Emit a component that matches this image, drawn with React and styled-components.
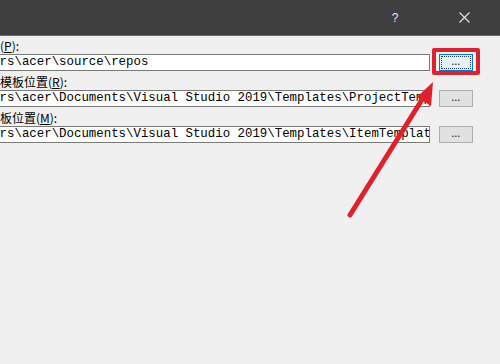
import React from "react";
import styled, { createGlobalStyle } from "styled-components";

const Global = createGlobalStyle`
  html, body { margin: 0; padding: 0; background: #f0f0f0; }
  body { width: 500px; height: 364px; overflow: hidden; font-family: "Noto Sans CJK SC", "Noto Sans", sans-serif; }
`;

const Page = styled.div`
  position: relative;
  width: 500px;
  height: 364px;
  background: #f0f0f0;
  overflow: hidden;
`;

const TitleBar = styled.div`
  height: 35px;
  background: #3f3f3f;
  border-bottom: 1px solid #6b6b6b;
  display: flex;
  align-items: center;
  justify-content: flex-end;
  color: #e6e6e6;
`;

const TitleButton = styled.div`
  width: ${(p) => p.$w}px;
  height: 35px;
  margin-right: ${(p) => p.$mr || 0}px;
  display: flex;
  align-items: center;
  justify-content: center;
  font-family: "Liberation Sans", Arial, sans-serif;
  font-size: 12px;
`;

const Form = styled.div`
  margin-left: -48px;
  padding-top: 2px;
  display: flex;
  flex-direction: column;
  gap: 3px;
`;

const Group = styled.div`
  display: flex;
  flex-direction: column;
`;

const Label = styled.div`
  height: 16px;
  line-height: 16px;
  font-size: 12px;
  color: #000;
  white-space: nowrap;
  font-family: "Noto Sans CJK SC", "Noto Sans", sans-serif;
  u { text-decoration: underline; text-underline-offset: 1px; }
`;

const FieldRow = styled.div`
  display: flex;
  align-items: center;
  gap: 9px;
  height: 17px;
`;

const TextBox = styled.div`
  box-sizing: border-box;
  width: 478px;
  height: 17px;
  background: #fff;
  border: 1px solid #7a7a7a;
  padding: 0 2px;
  font-family: "Liberation Mono", "DejaVu Sans Mono", monospace;
  font-size: 12.4px;
  line-height: 15px;
  color: #000;
  white-space: nowrap;
  overflow: hidden;
`;

const BrowseWrap = styled.div`
  position: relative;
  display: flex;
`;

const Browse = styled.div`
  box-sizing: border-box;
  width: 34px;
  height: 17px;
  background: ${(p) => (p.$focused ? "#e5f1fb" : "#e1e1e1")};
  border: 1px solid ${(p) => (p.$focused ? "#0078d7" : "#adadad")};
  padding: 1px;
  display: flex;
`;

const BrowseInner = styled.div`
  flex: 1;
  display: flex;
  align-items: center;
  justify-content: center;
  border: 1px dotted ${(p) => (p.$focused ? "#1c3d7a" : "transparent")};
  font-family: "Liberation Sans", Arial, sans-serif;
  font-size: 9px;
  font-weight: bold;
  letter-spacing: 0.5px;
  color: #333;
  line-height: 1;
  padding-bottom: 1px;
`;

const Highlight = styled.div`
  position: absolute;
  left: -7px;
  top: -6px;
  width: 48px;
  height: 27px;
  box-sizing: border-box;
  border: 4px solid #e0202a;
  border-radius: 2px;
  pointer-events: none;
`;

const Overlay = styled.svg`
  position: absolute;
  left: 0;
  top: 0;
  pointer-events: none;
`;

const rows = [
  { pre: "项目位置(", key: "P", path: "C:\\Users\\acer\\source\\repos", focused: true },
  { pre: "用户项目模板位置(", key: "R", path: "C:\\Users\\acer\\Documents\\Visual Studio 2019\\Templates\\ProjectTemplates" },
  { pre: "用户项模板位置(", key: "M", path: "C:\\Users\\acer\\Documents\\Visual Studio 2019\\Templates\\ItemTemplates" },
];

export default function App() {
  return (
    <Page>
      <Global />
      <TitleBar>
        <TitleButton $w={46} $mr={23}>?</TitleButton>
        <TitleButton $w={46} $mr={13}>
          <svg width="11" height="11" viewBox="0 0 11 11">
            <path d="M0.5 0.5 L10.5 10.5 M10.5 0.5 L0.5 10.5" stroke="#e6e6e6" strokeWidth="1.1" />
          </svg>
        </TitleButton>
      </TitleBar>
      <Form>
        {rows.map((r) => (
          <Group key={r.key}>
            <Label>
              {r.pre}
              <u>{r.key}</u>):
            </Label>
            <FieldRow>
              <TextBox>{r.path}</TextBox>
              <BrowseWrap>
                <Browse $focused={r.focused}>
                  <BrowseInner $focused={r.focused}>...</BrowseInner>
                </Browse>
                {r.focused && <Highlight />}
              </BrowseWrap>
            </FieldRow>
          </Group>
        ))}
      </Form>
      <Overlay width="500" height="364" viewBox="0 0 500 364">
        <line x1="350" y1="215" x2="423" y2="98" stroke="#e0202a" strokeWidth="5" strokeLinecap="round" />
        <polygon points="433,82 417,97 431,106" fill="#e0202a" />
      </Overlay>
    </Page>
  );
}
